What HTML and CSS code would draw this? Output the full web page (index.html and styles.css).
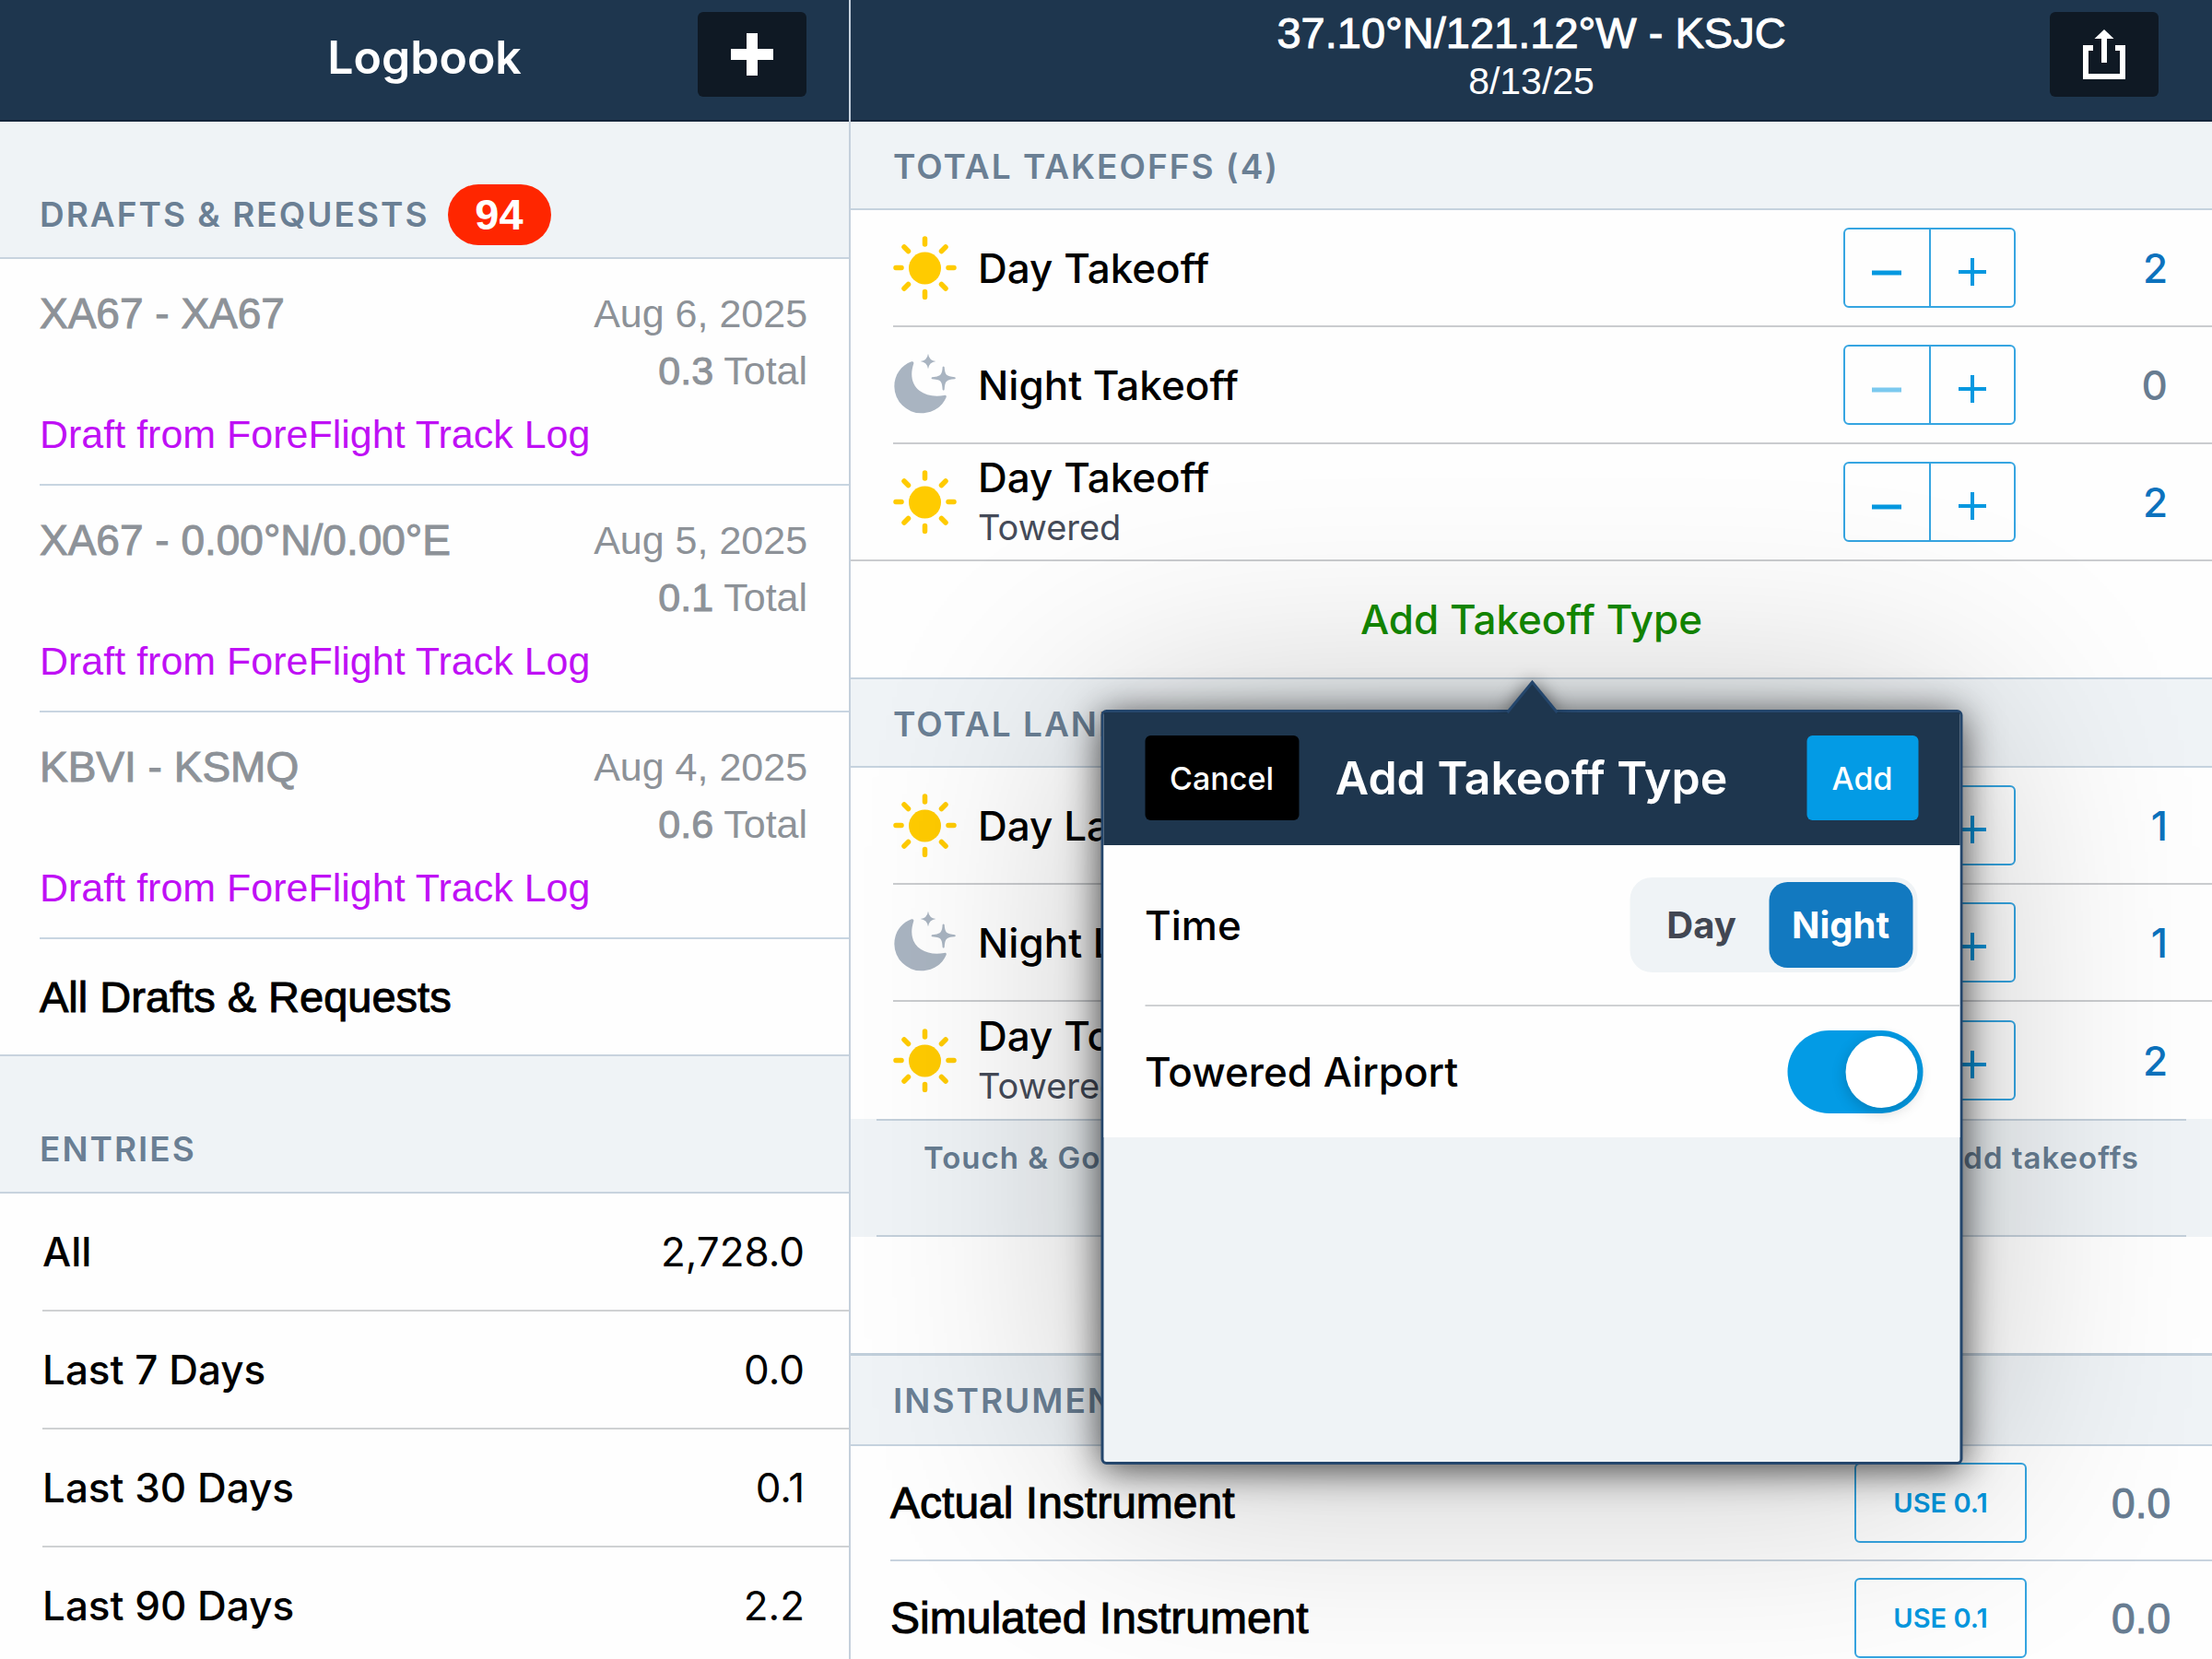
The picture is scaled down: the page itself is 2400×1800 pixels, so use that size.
FILE: index.html
```html
<!DOCTYPE html>
<html lang="en">

<head>
    <meta charset="UTF-8">
    <meta name="viewport" content="width=device-width, initial-scale=1.0">
    <title>Logbook</title>
    <link rel="stylesheet" href="styles.css">
</head>

<body>
    <!-- Icons shared by the rows -->
    <svg class="sprite" aria-hidden="true">
        <symbol id="sun" viewBox="0 0 69 69">
            <circle cx="34.5" cy="35" r="17.5" fill="#ffcb00" />
            <path d="M34.5 3v6M34.5 60.500v6M3 34.500h6M60 34.500h6M12 12l4.500 4.500M57 12l-4.500 4.500M12 57l4.500-4.500M57 57l-4.500-4.500" stroke="#ffcb00" stroke-width="5.500" stroke-linecap="round" />
        </symbol>
        <symbol id="moon" viewBox="0 0 207 207">
            <path fill="#a9b4c1" d="M60 28C26 40 4 72 4 109a88 88 0 0 0 88 87c38 0 68-21 81-52q2-8-7-6C105 150 40 115 67 34q1-8-7-6z" />
            <path fill="#a9b4c1" d="M114 2q3 22 25 25q-22 3-25 25q-3-22-25-25q22-3 25-25z" />
            <path fill="#a9b4c1" d="M161 46q3-5 6 0c2 26 6 30 34 33q5 3 0 6c-28 2-32 6-34 34q-3 5-6 0c-2-28-6-32-34-34q-5-3 0-6c28-3 32-7 34-33z" />
        </symbol>
    </svg>

    <div class="app">
        <!-- Left column -->
        <nav class="sidebar">
            <header class="topbar">
                <h1 class="topbar-title logbook">Logbook</h1>
                <button class="icon-btn" type="button" aria-label="New entry">
                    <svg width="48" height="48" viewBox="0 0 48 48"><path d="M24 1v46M1 24h46" stroke="#fff" stroke-width="12" /></svg>
                </button>
            </header>

            <div class="side-head">
                <h2 class="caption">DRAFTS &amp; REQUESTS</h2>
                <span class="badge">94</span>
            </div>
            <ul class="drafts">
                <li class="draft">
                    <div class="draft-top">
                        <span class="route">XA67 - XA67</span>
                        <span class="draft-info">Aug 6, 2025<br><b>0.3</b> Total</span>
                    </div>
                    <a class="draft-source" href="#">Draft from ForeFlight Track Log</a>
                </li>
                <li class="draft">
                    <div class="draft-top">
                        <span class="route">XA67 - 0.00°N/0.00°E</span>
                        <span class="draft-info">Aug 5, 2025<br><b>0.1</b> Total</span>
                    </div>
                    <a class="draft-source" href="#">Draft from ForeFlight Track Log</a>
                </li>
                <li class="draft">
                    <div class="draft-top">
                        <span class="route">KBVI - KSMQ</span>
                        <span class="draft-info">Aug 4, 2025<br><b>0.6</b> Total</span>
                    </div>
                    <a class="draft-source" href="#">Draft from ForeFlight Track Log</a>
                </li>
            </ul>
            <a class="all-drafts" href="#">All Drafts &amp; Requests</a>

            <div class="side-head">
                <h2 class="caption">ENTRIES</h2>
            </div>
            <ul class="entries">
                <li><a class="entry" href="#">All <span>2,728.0</span></a></li>
                <li><a class="entry" href="#">Last 7 Days <span>0.0</span></a></li>
                <li><a class="entry" href="#">Last 30 Days <span>0.1</span></a></li>
                <li><a class="entry" href="#">Last 90 Days <span>2.2</span></a></li>
            </ul>
        </nav>

        <!-- Entry detail -->
        <main class="detail">
            <header class="topbar detail-bar">
                <div class="topbar-title">
                    <h1 class="flight">37.10°N/121.12°W - KSJC</h1>
                    <p class="flight-date">8/13/25</p>
                </div>
                <button class="icon-btn" type="button" aria-label="Share">
                    <svg width="48" height="56" viewBox="0 0 48 56" fill="none" stroke="#fff" stroke-width="6">
                        <path d="M12 21H4v31h40V21h-8" />
                        <path d="M24 37V8" />
                        <path d="M24 1l10.500 10h-21z" fill="#fff" stroke="none" />
                    </svg>
                </button>
            </header>

            <h2 class="caption section-head">TOTAL TAKEOFFS (4)</h2>
            <div class="row">
                <svg class="row-icon"><use href="#sun" /></svg>
                <div class="row-label">Day Takeoff</div>
                <div class="stepper">
                    <button type="button" aria-label="Remove"><svg width="32" height="32"><path d="M0 17h32" stroke-width="5" /></svg></button>
                    <button type="button" aria-label="Add"><svg width="32" height="32"><path d="M1 16h30M16 1v30" stroke-width="4" /></svg></button>
                </div>
                <div class="value">2</div>
            </div>
            <div class="row">
                <svg class="row-icon"><use href="#moon" /></svg>
                <div class="row-label">Night Takeoff</div>
                <div class="stepper">
                    <button type="button" aria-label="Remove" disabled><svg width="32" height="32"><path d="M0 17h32" stroke-width="5" /></svg></button>
                    <button type="button" aria-label="Add"><svg width="32" height="32"><path d="M1 16h30M16 1v30" stroke-width="4" /></svg></button>
                </div>
                <div class="value zero">0</div>
            </div>
            <div class="row last">
                <svg class="row-icon"><use href="#sun" /></svg>
                <div class="row-label">Day Takeoff<small>Towered</small></div>
                <div class="stepper">
                    <button type="button" aria-label="Remove"><svg width="32" height="32"><path d="M0 17h32" stroke-width="5" /></svg></button>
                    <button type="button" aria-label="Add"><svg width="32" height="32"><path d="M1 16h30M16 1v30" stroke-width="4" /></svg></button>
                </div>
                <div class="value">2</div>
            </div>

            <div class="add-row">
                <button class="add-type" type="button">Add Takeoff Type</button>

                <!-- Popover anchored to the button above -->
                <form class="popover" role="dialog" aria-labelledby="popoverTitle">
                    <svg class="arrow" width="56" height="36" viewBox="0 0 56 36">
                        <path d="M0 36L28 2l28 34z" fill="#1e364e" />
                        <path d="M1 35L28 2l27 33" fill="none" stroke="#24466c" stroke-width="3" />
                    </svg>
                    <div class="popover-bar">
                        <button class="bar-btn cancel" type="button">Cancel</button>
                        <h2 id="popoverTitle">Add Takeoff Type</h2>
                        <button class="bar-btn add" type="button">Add</button>
                    </div>
                    <div class="popover-body">
                        <div class="option time" role="radiogroup" aria-labelledby="timeLabel">
                            <span id="timeLabel">Time</span>
                            <div class="segmented">
                                <input type="radio" name="time" id="timeDay">
                                <label for="timeDay">Day</label>
                                <input type="radio" name="time" id="timeNight" checked>
                                <label for="timeNight">Night</label>
                            </div>
                        </div>
                        <div class="option towered">
                            <label for="towered">Towered Airport</label>
                            <input class="switch" type="checkbox" role="switch" id="towered" checked>
                        </div>
                    </div>
                </form>
            </div>

            <h2 class="caption section-head">TOTAL LANDINGS (4)</h2>
            <div class="row">
                <svg class="row-icon"><use href="#sun" /></svg>
                <div class="row-label">Day Landing</div>
                <div class="stepper">
                    <button type="button" aria-label="Remove"><svg width="32" height="32"><path d="M0 17h32" stroke-width="5" /></svg></button>
                    <button type="button" aria-label="Add"><svg width="32" height="32"><path d="M1 16h30M16 1v30" stroke-width="4" /></svg></button>
                </div>
                <div class="value">1</div>
            </div>
            <div class="row">
                <svg class="row-icon"><use href="#moon" /></svg>
                <div class="row-label">Night Landing</div>
                <div class="stepper">
                    <button type="button" aria-label="Remove"><svg width="32" height="32"><path d="M0 17h32" stroke-width="5" /></svg></button>
                    <button type="button" aria-label="Add"><svg width="32" height="32"><path d="M1 16h30M16 1v30" stroke-width="4" /></svg></button>
                </div>
                <div class="value">1</div>
            </div>
            <div class="row no-line">
                <svg class="row-icon"><use href="#sun" /></svg>
                <div class="row-label">Day Touch &amp; Go<small>Towered</small></div>
                <div class="stepper">
                    <button type="button" aria-label="Remove"><svg width="32" height="32"><path d="M0 17h32" stroke-width="5" /></svg></button>
                    <button type="button" aria-label="Add"><svg width="32" height="32"><path d="M1 16h30M16 1v30" stroke-width="4" /></svg></button>
                </div>
                <div class="value">2</div>
            </div>
            <div class="note">
                <p><span>Touch &amp; Go landings</span> <span>do not add takeoffs</span></p>
            </div>
            <div class="spacer"></div>

            <h2 class="caption section-head instrument-head">INSTRUMENT</h2>
            <div class="time-row">
                <span class="time-label">Actual Instrument</span>
                <button class="use-btn" type="button">USE 0.1</button>
                <span class="time-value">0.0</span>
            </div>
            <div class="time-row">
                <span class="time-label">Simulated Instrument</span>
                <button class="use-btn" type="button">USE 0.1</button>
                <span class="time-value">0.0</span>
            </div>
        </main>
    </div>
</body>

</html>
```

FILE: styles.css
```css
* {
    box-sizing: border-box;
}

body {
    margin: 0;
    font-family: Inter, "Liberation Sans", sans-serif;
    font-size: 44px;
    color: #000;
    background-color: #fefefe;
}

h1,
h2,
p,
ul {
    margin: 0;
    padding: 0;
    list-style: none;
}

a {
    color: inherit;
    text-decoration: none;
}

button {
    font-family: inherit;
    padding: 0;
    cursor: pointer;
}

.sprite {
    position: absolute;
    width: 0;
    height: 0;
}

.app {
    display: grid;
    grid-template-columns: 5fr 8fr;
    height: 100vh;
    overflow: hidden;
}

/* Top bars */
.topbar {
    display: grid;
    grid-template-columns: 1fr auto 1fr;
    align-items: center;
    height: 132px;
    padding: 10px 46px 16px;
    background-color: #1e364e;
    border-bottom: 2px solid #14253a;
    color: #fff;
}

.detail-bar {
    padding-left: 58px;
    padding-right: 58px;
}

.topbar-title {
    grid-column: 2;
    text-align: center;
}

.logbook {
    font-size: 50px;
    font-weight: 600;
}

.flight {
    font: 47px/52px "Liberation Sans", sans-serif;
    -webkit-text-stroke: 1px currentColor;
}

.flight-date {
    font: 41px/52px "Liberation Sans", sans-serif;
}

.icon-btn {
    display: flex;
    align-items: center;
    justify-content: center;
    align-self: start;
    justify-self: end;
    width: 118px;
    height: 92px;
    margin-top: 3px;
    border: 0;
    border-radius: 6px;
    background-color: #0f1924;
}

/* Left column */
.sidebar {
    border-right: 2px solid #c5d0dc;
}

.caption {
    font-size: 37px;
    font-weight: 600;
    letter-spacing: 2px;
    color: #6a7f94;
}

.side-head {
    display: flex;
    align-items: center;
    gap: 20px;
    height: 149px;
    padding: 66px 43px 12px;
    background-color: #eff3f6;
    border-bottom: 2px solid #c8d3de;
}

.badge {
    width: 112px;
    border-radius: 33px;
    background-color: #ff2600;
    color: #fff;
    font: bold 47px/66px "Liberation Sans", sans-serif;
    text-align: center;
}

.draft {
    height: 246px;
    margin-left: 43px;
    padding: 28px 45px 0 0;
    border-bottom: 2px solid #c8d5e1;
    font: 43px/62px "Liberation Sans", sans-serif;
    color: #8d9298;
}

.draft-top {
    display: flex;
    justify-content: space-between;
}

.route {
    font-size: 46px;
    -webkit-text-stroke: 1px currentColor;
}

.draft-info {
    text-align: right;
}

.draft-info b {
    font-weight: normal;
    -webkit-text-stroke: 1px currentColor;
}

.draft-source {
    line-height: 76px;
    color: #bf10f5;
}

.all-drafts {
    display: block;
    padding-left: 43px;
    border-bottom: 2px solid #c8d3de;
    font: 47px/125px "Liberation Sans", sans-serif;
    -webkit-text-stroke: 1px currentColor;
}

.entry {
    display: flex;
    justify-content: space-between;
    margin-left: 46px;
    padding-right: 48px;
    border-bottom: 2px solid #cfd1d3;
    font-weight: 500;
    line-height: 126px;
}

.entry span {
    font-weight: 400;
}

/* Detail rows */
.section-head {
    height: 96px;
    padding: 4px 0 0 46px;
    border-bottom: 2px solid #c5d2de;
    background-color: #eff3f6;
    line-height: 90px;
}

.row {
    display: flex;
    align-items: center;
    height: 127px;
    margin-left: 46px;
    padding-right: 48px;
    border-bottom: 2px solid #cacccf;
}

.row.last {
    margin-left: 0;
    padding-left: 46px;
}

.row.no-line {
    border-bottom: 0;
}

.row-icon {
    width: 69px;
    height: 69px;
    margin-right: 23px;
}

.row-label {
    flex: 1;
    font-weight: 500;
    line-height: 54px;
}

.row-label small {
    display: block;
    font-size: 38px;
    font-weight: 400;
    line-height: 54px;
    color: #454b59;
}

.stepper {
    display: flex;
    width: 187px;
    height: 87px;
    border: 2px solid #36a5e1;
    border-radius: 6px;
}

.stepper button {
    flex: 1;
    padding-top: 12px;
    border: 0;
    background: none;
    stroke: #0598e0;
}

.stepper button + button {
    border-left: 2px solid #36a5e1;
}

.stepper button:disabled {
    stroke: #7bc9ef;
}

.value {
    width: 165px;
    text-align: right;
    font-weight: 500;
    color: #0c72bd;
}

.value.zero {
    color: #677c91;
}

.add-row {
    position: relative;
    display: flex;
    height: 128px;
    border-bottom: 2px solid #c5d2de;
}

.add-type {
    flex: 1;
    border: 0;
    background: none;
    font-size: 44px;
    font-weight: 500;
    color: #148a00;
}

.note {
    height: 128px;
    padding: 0 28px;
    background-color: #eff3f6;
}

.note p {
    display: flex;
    justify-content: space-between;
    height: 128px;
    padding: 16px 51px;
    border: solid #c3cfda;
    border-width: 2px 0;
    font-size: 33px;
    font-weight: 600;
    line-height: 48px;
    letter-spacing: 1px;
    color: #667c91;
}

.spacer {
    height: 126px;
}

.instrument-head {
    height: 101px;
    border-top: 3px solid #c0ceda;
}

.time-row {
    display: flex;
    align-items: center;
    height: 125px;
    margin-left: 43px;
    padding-right: 45px;
    border-bottom: 2px solid #c8d3de;
    font-family: "Liberation Sans", sans-serif;
    font-size: 48px;
}

.time-label {
    flex: 1;
    -webkit-text-stroke: 1px currentColor;
}

.use-btn {
    width: 187px;
    height: 87px;
    border: 2px solid #36a5e1;
    border-radius: 6px;
    background: none;
    font-family: Inter, sans-serif;
    font-size: 29px;
    font-weight: 600;
    color: #0598e0;
}

.time-value {
    width: 156px;
    text-align: right;
    font-size: 46px;
    color: #677c91;
    -webkit-text-stroke: 1px currentColor;
}

/* Popover */
.popover {
    position: absolute;
    z-index: 1;
    top: 161px;
    left: 50%;
    width: 935px;
    height: 819px;
    transform: translateX(-50%);
    border: 3px solid #24466c;
    border-radius: 6px;
    background-color: #eff3f6;
    box-shadow: 0 5px 42px rgba(0, 0, 0, 0.7), 0 6px 260px rgba(0, 0, 0, 0.24);
}

.arrow {
    position: absolute;
    top: -35px;
    left: calc(50% - 27px);
    overflow: visible;
    filter: drop-shadow(0 2px 10px rgba(0, 0, 0, 0.6));
    clip-path: inset(-40px -40px 0 -40px);
}

.popover-bar {
    display: grid;
    grid-template-columns: 1fr auto 1fr;
    align-items: center;
    height: 144px;
    padding: 0 45px 2px;
    background-color: #1e364e;
    color: #fff;
}

.popover-bar h2 {
    font-size: 50px;
    font-weight: 600;
}

.bar-btn {
    height: 92px;
    border: 0;
    border-radius: 6px;
    color: #fff;
    font-size: 34px;
    font-weight: 500;
}

.cancel {
    justify-self: start;
    width: 167px;
    background-color: #000;
}

.add {
    justify-self: end;
    width: 121px;
    background-color: #039be5;
}

.popover-body {
    background-color: #fefefe;
}

.option {
    display: flex;
    align-items: center;
    justify-content: space-between;
    margin-left: 45px;
    font-weight: 500;
}

.time {
    height: 175px;
    padding-right: 46px;
    border-bottom: 2px solid #cfd1d3;
}

.towered {
    height: 142px;
    padding-right: 40px;
}

.segmented {
    display: flex;
    padding: 5px;
    border-radius: 24px;
    background-color: #eff3f6;
}

.segmented input {
    position: absolute;
    opacity: 0;
}

.segmented label {
    width: 146px;
    border-radius: 20px;
    font-size: 40px;
    font-weight: 700;
    line-height: 93px;
    text-align: center;
    color: #424753;
}

.segmented input:checked + label {
    width: 156px;
    background-color: #1279c0;
    color: #fff;
}

.switch {
    appearance: none;
    display: flex;
    align-items: center;
    width: 147px;
    height: 90px;
    margin: 0;
    padding: 6px;
    border-radius: 45px;
    background-color: #039be5;
}

.switch::before {
    content: "";
    width: 78px;
    height: 78px;
    margin-left: auto;
    border-radius: 50%;
    background-color: #fff;
    box-shadow: 0 4px 16px rgba(0, 0, 0, 0.2);
}
```
